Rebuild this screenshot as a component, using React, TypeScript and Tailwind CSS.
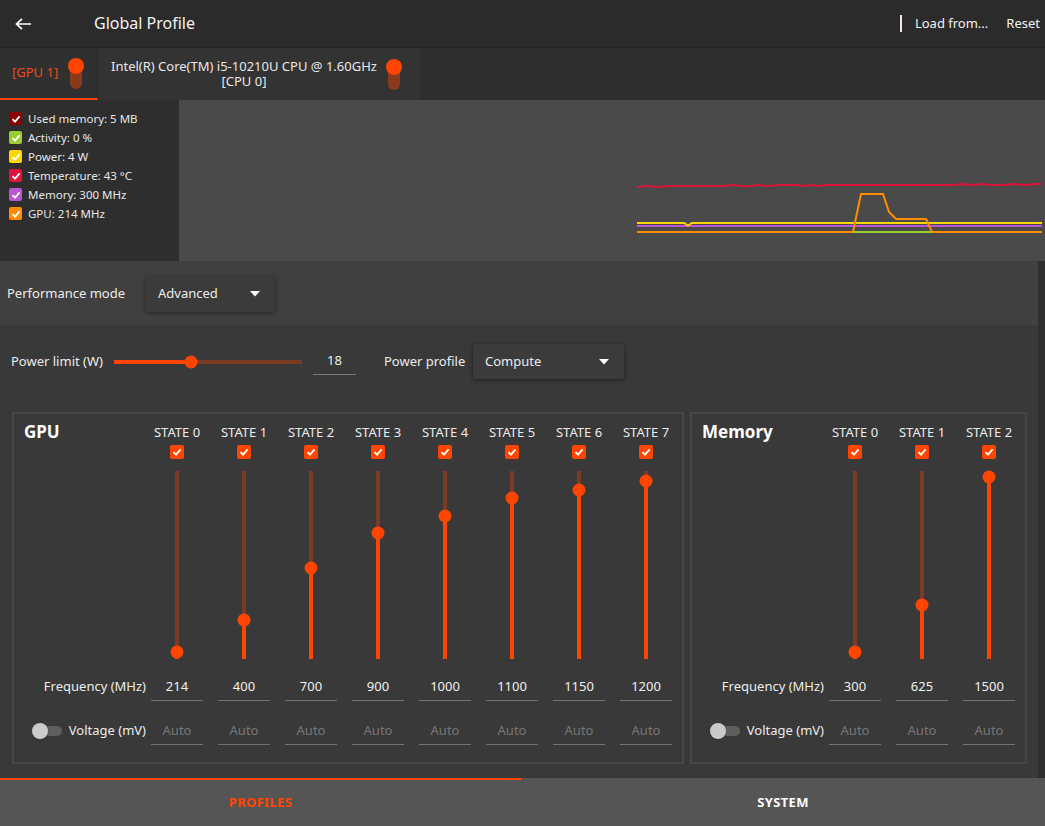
const legend = [
	{ color: "bg-[#8b0000]", label: "Used memory: 5 MB" },
	{ color: "bg-[#9acd32]", label: "Activity: 0 %" },
	{ color: "bg-[#ffd700]", label: "Power: 4 W" },
	{ color: "bg-[#dc143c]", label: "Temperature: 43 °C" },
	{ color: "bg-[#ba55d3]", label: "Memory: 300 MHz" },
	{ color: "bg-[#ff8c00]", label: "GPU: 214 MHz" },
];

const gpuStates = [214, 400, 700, 900, 1000, 1100, 1150, 1200];
const memStates = [300, 625, 1500];

// red temperature line, hand picked from the graph
const tempLine =
	"458,87 468,86 478,87 491,86 544,86 554,85 568,86.5 579,85 588,86 601,85 618,85 623,86 631,85 639,86 646,85 774,85 783,84 791,85 804,84 811,85 824,85 834,84 846,85 856,84 863,84";
const gpuLine =
	"458,132 674,132 682,94 704,94 710,112 717,119 747,119 753,132 863,132";

export default function App() {
	return (
		<div className="w-[1045px] h-[826px] flex flex-col overflow-hidden bg-[#393939] text-[#ececec] font-['Noto_Sans',sans-serif]">
			<Header />
			<Tabs />
			<Graph />
			<div className="flex flex-1 min-h-0">
				<div className="flex flex-1 flex-col">
					<div className="flex h-[64px] items-center bg-[#404040] pl-[7px] pt-[1px]">
						<span className="w-[139px] text-[13px]">Performance mode</span>
						<Select label="Advanced" className="w-[129px] h-[36px]" />
					</div>
					<div className="flex flex-1 flex-col">
						<PowerRow />
						<div className="mt-[33px] flex gap-[6px] pl-[12px]">
							<StateCard
								title="GPU"
								values={gpuStates}
								min={214}
								range={171}
								cols="grid-cols-[112px_repeat(8,52px)]"
							/>
							<StateCard
								title="Memory"
								values={memStates}
								min={300}
								range={175}
								cols="grid-cols-[112px_repeat(3,52px)]"
								max={1500}
							/>
						</div>
					</div>
				</div>
				<div className="w-[7px] bg-[#2f2f2f]" />
			</div>
			<div className="flex h-[48px] bg-[#555555] text-[13px] font-bold tracking-wide">
				<div className="flex w-[521px] items-center justify-center border-t-2 border-[#ff4500] text-[#ff4500]">
					PROFILES
				</div>
				<div className="flex flex-1 items-center justify-center border-t-2 border-transparent text-white">
					SYSTEM
				</div>
			</div>
		</div>
	);
}

function Header() {
	return (
		<div className="flex h-[48px] items-center border-b border-[#242424] bg-[#2b2b2b]">
			<div className="w-[94px] pl-[15px]">
				<svg width="16" height="12" viewBox="0 0 16 12" fill="none">
					<path d="M16 6 H1.5 M7 0.8 L1.5 6 L7 11.2" stroke="white" strokeWidth="1.7" />
				</svg>
			</div>
			<span className="-mt-[2px] text-[16px] text-[#f2f2f2]">Global Profile</span>
			<div className="ml-auto flex items-center pr-[5px] text-[13px] text-[#f2f2f2]">
				<div className="h-[17px] w-[2px] bg-[#f4e6dc]" />
				<span className="ml-[13px]">Load from...</span>
				<span className="ml-[18px]">Reset</span>
			</div>
		</div>
	);
}

function VSwitch() {
	return (
		<div className="relative h-[31px] w-[16px]">
			<div className="absolute bottom-0 left-[2px] h-[27px] w-[12px] rounded-full bg-[#8a3a1c]" />
			<div className="absolute left-0 top-0 h-[16px] w-[16px] rounded-full bg-[#ff4500]" />
		</div>
	);
}

function Tabs() {
	return (
		<div className="flex h-[52px] bg-[#2e2e2e] text-[13px]">
			<div className="flex w-[98px] items-center gap-[10px] border-b-2 border-r border-[#ff4500] border-r-[#272727] bg-[#303030] pl-[12px]">
				<span className="text-[#ef4a17]">[GPU 1]</span>
				<VSwitch />
			</div>
			<div className="flex w-[322px] items-center gap-[9px] bg-[#333333] pl-[13px]">
				<div className="text-center leading-[15px] text-[#e8e8e8]">
					Intel(R) Core(TM) i5-10210U CPU @ 1.60GHz
					<br />
					[CPU 0]
				</div>
				<VSwitch />
			</div>
		</div>
	);
}

function Graph() {
	return (
		<div className="flex h-[161px]">
			<div className="w-[179px] bg-[#2e2e2e] pt-[9px]">
				{legend.map((l) => (
					<div key={l.label} className="flex h-[19px] items-center gap-[6px] pl-[9px]">
						<div className={`flex h-[13px] w-[13px] items-center justify-center rounded-[2px] ${l.color}`}>
							<CheckMark size={10} />
						</div>
						<span className="text-[11.5px] text-[#e6e6e6]">{l.label}</span>
					</div>
				))}
			</div>
			<div className="flex-1 bg-[#4a4a4a]">
				<svg width="866" height="161" viewBox="0 0 866 161">
					<polyline points="458,132 863,132" fill="none" stroke="#9acd32" strokeWidth="2" />
					<polyline points="458,126 863,126" fill="none" stroke="#ba55d3" strokeWidth="2" />
					<polyline
						points="458,123 505,123 509,125.5 513,123 863,123"
						fill="none"
						stroke="#ffd700"
						strokeWidth="2"
					/>
					<polyline points={gpuLine} fill="none" stroke="#ff8c00" strokeWidth="2" />
					<polyline points={tempLine} fill="none" stroke="#dc143c" strokeWidth="2" />
				</svg>
			</div>
		</div>
	);
}

function CheckMark({ size }: { size: number }) {
	return (
		<svg width={size} height={size} viewBox="0 0 10 10" fill="none">
			<path d="M1.5 5.2 L4 7.6 L8.6 2.4" stroke="white" strokeWidth="1.8" />
		</svg>
	);
}

function Triangle() {
	return (
		<svg width="10" height="6" viewBox="0 0 10 6">
			<path d="M0 0 L10 0 L5 5.5 Z" fill="white" />
		</svg>
	);
}

function Select({ label, className }: { label: string; className: string }) {
	return (
		<div
			className={`flex items-center justify-between rounded-[2px] bg-[#3b3b3b] pl-[12px] pr-[15px] text-[13px] shadow-[0_1px_4px_rgba(0,0,0,0.45)] ${className}`}
		>
			<span>{label}</span>
			<Triangle />
		</div>
	);
}

function PowerRow() {
	return (
		<div className="mt-[19px] flex h-[35px] items-center pl-[11px] text-[13px]">
			<span className="w-[103px]">Power limit (W)</span>
			<div className="relative h-[4px] w-[188px] bg-[#7a3a24]">
				<div className="absolute left-0 top-0 h-full w-[77px] bg-[#ff4500]" />
				<div className="absolute left-[77px] top-1/2 h-[13px] w-[13px] -translate-x-1/2 -translate-y-1/2 rounded-full bg-[#ff4500]" />
			</div>
			<div className="ml-[11px] flex h-[26px] w-[43px] items-center justify-center border-b border-[#777777]">
				18
			</div>
			<span className="ml-[28px] w-[89px]">Power profile</span>
			<Select label="Compute" className="w-[151px] h-[35px]" />
		</div>
	);
}

function VSlider({ offset }: { offset: number }) {
	return (
		<div className="relative mx-auto mt-[12px] h-[188px] w-[4px] bg-[#7a3a24]">
			<div className="absolute bottom-0 left-0 w-full bg-[#ff4500]" style={{ height: 188 - offset }} />
			<div
				className="absolute left-1/2 h-[13px] w-[13px] -translate-x-1/2 -translate-y-1/2 rounded-full bg-[#ff4500]"
				style={{ top: offset }}
			/>
		</div>
	);
}

function Toggle() {
	return (
		<div className="relative h-[16px] w-[30px]">
			<div className="absolute left-[6px] top-[3px] h-[10px] w-[24px] rounded-full bg-[#5e5e5e]" />
			<div className="absolute left-0 top-0 h-[16px] w-[16px] rounded-full bg-[#cacaca] shadow" />
		</div>
	);
}

function StateCard({
	title,
	values,
	min,
	range,
	cols,
	max = 1200,
}: {
	title: string;
	values: number[];
	min: number;
	range: number;
	cols: string;
	max?: number;
}) {
	const offsetOf = (v: number) => 181 - ((v - min) / (max - min)) * range;
	return (
		<div className="border-2 border-[#464646] pb-[17px] pl-[10px] pr-[10px] pt-[8px]">
			<div className={`grid gap-x-[15px] ${cols}`}>
				<div className="text-[17px] font-bold leading-[20px] text-white">{title}</div>
				{values.map((_, i) => (
					<div key={`l${i}`} className="whitespace-nowrap text-center text-[13px] leading-[20px]">
						STATE {i}
					</div>
				))}

				<div />
				{values.map((_, i) => (
					<div
						key={`c${i}`}
						className="mx-auto mt-[3px] flex h-[14px] w-[14px] items-center justify-center rounded-[2px] bg-[#ff4500]"
					>
						<CheckMark size={10} />
					</div>
				))}

				<div />
				{values.map((v) => (
					<VSlider key={`s${v}`} offset={offsetOf(v)} />
				))}

				<div className="-mr-[10px] mt-[14px] flex h-[28px] items-center justify-end whitespace-nowrap text-[13px]">
					Frequency (MHz)
				</div>
				{values.map((v) => (
					<div
						key={`f${v}`}
						className="mt-[14px] flex h-[28px] items-center justify-center border-b border-[#737373] text-[13px] text-[#f0f0f0]"
					>
						{v}
					</div>
				))}

				<div className="-mr-[10px] mt-[16px] flex h-[28px] items-center justify-end gap-[7px] whitespace-nowrap text-[13px]">
					<Toggle />
					<span>Voltage (mV)</span>
				</div>
				{values.map((v) => (
					<div
						key={`v${v}`}
						className="mt-[16px] flex h-[28px] items-center justify-center border-b border-[#737373] text-[13px] text-[#777777]"
					>
						Auto
					</div>
				))}
			</div>
		</div>
	);
}
